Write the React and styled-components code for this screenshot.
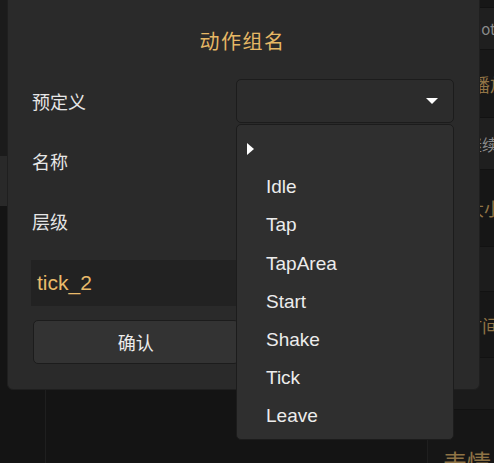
import React from 'react'
import styled, { createGlobalStyle } from 'styled-components'

const GlobalStyle = createGlobalStyle`
    html, body {
        margin: 0;
        padding: 0;
        background: #141414;
    }
    * { box-sizing: border-box; }
`

const Screen = styled.div`
    position: relative;
    width: 494px;
    height: 463px;
    overflow: hidden;
    display: flex;
    flex-direction: row;
    background: #141414;
    font-family: "Liberation Sans", "Noto Sans CJK SC", sans-serif;
`

const Sidebar = styled.div`
    width: 46px;
    display: flex;
    flex-direction: column;
    border-right: 1px solid #1f1f1f;
`

const SideItem = styled.div`
    height: ${p => p.h}px;
    background: ${p => p.bg};
`

const Main = styled.div`
    flex: 1;
`

const RightPanel = styled.div`
    width: 67px;
    display: flex;
    flex-direction: column;
    border-left: 1px solid #1f1f1f;
`

const PanelRow = styled.div`
    height: ${p => p.h}px;
    flex-shrink: 0;
    background: ${p => p.bg};
    border-bottom: 1px solid #121212;
    display: flex;
    align-items: ${p => (p.top ? 'flex-start' : 'center')};
    padding-left: ${p => p.pad}px;
    padding-top: ${p => p.top || 0}px;
    white-space: nowrap;
    color: ${p => (p.gold ? '#8f7345' : '#8a8a8a')};
    font-size: ${p => p.size}px;
    font-family: "Noto Sans CJK SC", "Liberation Sans", sans-serif;
`

const Dialog = styled.div`
    position: absolute;
    left: 7px;
    top: -6px;
    width: 473px;
    height: 396px;
    background: #2a2a2a;
    border: 1px solid #1f1f1f;
    border-radius: 6px;
    padding: 0 25px 0 23px;
    display: flex;
    flex-direction: column;
`

const Title = styled.div`
    height: 84px;
    display: flex;
    align-items: center;
    justify-content: center;
    padding-top: 7px;
    color: #e6b865;
    font-size: 20px;
    letter-spacing: 1.5px;
    font-family: "Noto Sans CJK SC", sans-serif;
`

const Form = styled.div`
    display: grid;
    grid-template-columns: 1fr 218px;
    grid-auto-rows: 44px;
    row-gap: 16px;
`

const Label = styled.div`
    display: flex;
    align-items: center;
    padding-left: 1px;
    color: #e6e6e6;
    font-size: 18px;
    font-family: "Noto Sans CJK SC", sans-serif;
`

const SelectWrap = styled.div`
    position: relative;
`

const SelectBox = styled.div`
    height: 44px;
    background: #2c2c2c;
    border: 1px solid #1c1c1c;
    border-radius: 5px;
    display: flex;
    align-items: center;
    justify-content: flex-end;
    padding-right: 15px;
`

const Caret = styled.div`
    width: 0;
    height: 0;
    border-left: 6px solid transparent;
    border-right: 6px solid transparent;
    border-top: 6px solid #ffffff;
`

const Menu = styled.div`
    position: absolute;
    left: 0;
    top: 45px;
    width: 218px;
    z-index: 2;
    background: #2f2f2f;
    border: 1px solid #1c1c1c;
    border-radius: 5px;
    padding: 5px 0 3px;
`

const MenuItem = styled.div`
    height: 38.2px;
    display: flex;
    align-items: center;
    padding-left: 29px;
    color: #ececec;
    font-size: 19px;
`

const Marker = styled.div`
    width: 0;
    height: 0;
    margin-left: -19px;
    border-top: 6px solid transparent;
    border-bottom: 6px solid transparent;
    border-left: 7px solid #ffffff;
`

const TextField = styled.div`
    height: 44px;
    background: #222222;
    border: 1px solid #1c1c1c;
    border-radius: 4px;
`

const NameInput = styled.div`
    margin-top: 17px;
    height: 46px;
    background: #222222;
    display: flex;
    align-items: center;
    padding-left: 6px;
    color: #e9ba6a;
    font-size: 21px;
`

const Buttons = styled.div`
    margin-top: 14px;
    display: flex;
    gap: 8px;
    padding: 0 2px;
`

const Button = styled.div`
    flex: 1;
    height: 44px;
    background: #333333;
    border: 1px solid #1c1c1c;
    border-radius: 5px;
    display: flex;
    align-items: center;
    justify-content: center;
    color: #ececec;
    font-size: 18px;
    font-family: "Noto Sans CJK SC", sans-serif;
`

const options = ['Idle', 'Tap', 'TapArea', 'Start', 'Shake', 'Tick', 'Leave']

const panelRows = [
    { h: 8, bg: '#171717', text: '' },
    { h: 42, bg: '#1f1f1f', text: 'Motion', pad: 41, size: 15 },
    { h: 68, bg: '#181818', text: '播放', pad: 44, size: 18, gold: true },
    { h: 52, bg: '#1f1f1f', text: '继续', pad: 38, size: 16 },
    { h: 77, bg: '#161616', text: '大小', pad: 38, size: 18, gold: true },
    { h: 45, bg: '#1c1c1c', text: '' },
    { h: 66, bg: '#171717', text: '时间', pad: 36, size: 18, gold: true },
    { h: 52, bg: '#1b1b1b', text: '' },
    { h: 60, bg: '#161616', text: '表情', pad: 15, size: 24, gold: true, top: 34 },
]

function App() {
    return (
        <Screen>
            <GlobalStyle />
            <Sidebar>
                <SideItem h={156} bg="#1b1b1b" />
                <SideItem h={50} bg="#292929" />
                <SideItem h={257} bg="#141414" />
            </Sidebar>
            <Main />
            <RightPanel>
                {panelRows.map((r, i) => (
                    <PanelRow key={i} h={r.h} bg={r.bg} pad={r.pad || 0} size={r.size || 14} gold={r.gold} top={r.top}>
                        {r.text}
                    </PanelRow>
                ))}
            </RightPanel>

            <Dialog>
                <Title>动作组名</Title>
                <Form>
                    <Label>预定义</Label>
                    <SelectWrap>
                        <SelectBox>
                            <Caret />
                        </SelectBox>
                        <Menu>
                            <MenuItem><Marker /></MenuItem>
                            {options.map(o => (
                                <MenuItem key={o}>{o}</MenuItem>
                            ))}
                        </Menu>
                    </SelectWrap>
                    <Label>名称</Label>
                    <TextField />
                    <Label>层级</Label>
                    <TextField />
                </Form>
                <NameInput>tick_2</NameInput>
                <Buttons>
                    <Button>确认</Button>
                    <Button>取消</Button>
                </Buttons>
            </Dialog>
        </Screen>
    )
}

export default App
